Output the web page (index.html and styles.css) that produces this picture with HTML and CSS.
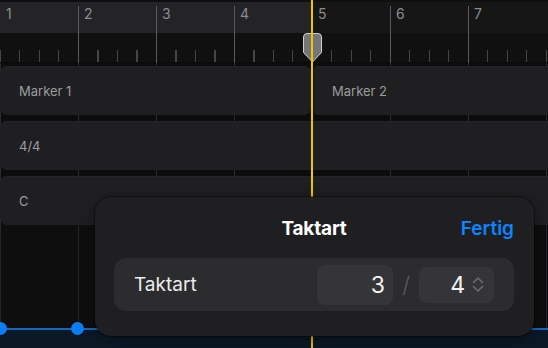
FILE: index.html
```html
<!DOCTYPE html>
<html lang="de">
<head>
<meta charset="utf-8">
<link rel="stylesheet" href="styles.css">
</head>
<body>
<div class="app">
  <div class="ruler">
    <div class="bar first"><span>1</span></div>
    <div class="bar"><span>2</span></div>
    <div class="bar"><span>3</span></div>
    <div class="bar"><span>4</span></div>
    <div class="bar"><span>5</span></div>
    <div class="bar"><span>6</span></div>
    <div class="bar"><span>7</span></div>
  </div>
  <div class="tracks">
    <div class="track">
      <div class="region marker1">Marker 1</div>
      <div class="region marker2">Marker 2</div>
    </div>
    <div class="track"><div class="region">4/4</div></div>
    <div class="track"><div class="region">C</div></div>
  </div>
  <div class="lane">
    <div class="lane-top"></div>
    <div class="lane-line"></div>
    <div class="lane-bottom"></div>
    <span class="dot dot1"></span>
    <span class="dot dot2"></span>
  </div>
  <div class="playhead">
    <svg class="handle" width="21" height="32" viewBox="0 0 21 32">
      <path d="M1.5 5 Q1.5 1.5 5 1.5 L16 1.5 Q19.5 1.5 19.5 5 L19.5 20.5 L10.5 30 L1.5 20.5 Z" fill="#767678" stroke="#d0d0d0" stroke-width="1"/>
    </svg>
  </div>
  <div class="popover">
    <div class="pop-header">
      <span></span>
      <span class="pop-title">Taktart</span>
      <span class="pop-done">Fertig</span>
    </div>
    <div class="pop-row">
      <span class="row-label">Taktart</span>
      <div class="fields">
        <div class="field num">3</div>
        <span class="slash">/</span>
        <div class="field den">4
          <svg class="chev" width="14" height="17" viewBox="0 0 14 17">
            <path d="M2.5 6.5 L7 2 L11.5 6.5 M2.5 10.5 L7 15 L11.5 10.5" fill="none" stroke="#6c6c70" stroke-width="1.6" stroke-linecap="round" stroke-linejoin="round"/>
          </svg>
        </div>
      </div>
    </div>
  </div>
</div>
</body>
</html>
```

FILE: styles.css
```css
* { box-sizing: border-box; }
html, body { margin: 0; padding: 0; }
body {
  width: 548px;
  height: 348px;
  overflow: hidden;
  background: #0d0d0d;
  font-family: Inter, "Noto Sans", sans-serif;
}
.app {
  position: relative;
  width: 548px;
  height: 348px;
  display: flex;
  flex-direction: column;
  overflow: hidden;
}

/* Ruler */
.ruler {
  height: 63px;
  flex: none;
  display: flex;
  padding-top: 6px;
  background:
    linear-gradient(#0f0f0f, #0f0f0f) top / 100% 2px no-repeat,
    repeating-linear-gradient(90deg, #454545 0 1px, transparent 1px 19.5px) left bottom / 100% 12px no-repeat,
    linear-gradient(90deg, #242426 0 312px, #161616 312px) left 2px / 100% 31px no-repeat,
    #101010;
  border-bottom: 1px solid #0a0a0a;
}
.bar {
  width: 78px;
  flex: none;
  height: 57px;
  border-left: 1px solid #5a5a5c;
  padding-left: 5px;
  color: #8c8c8e;
  font-size: 14px;
  line-height: 16px;
}
.bar.first { border-left-color: transparent; }

/* Tracks */
.tracks {
  flex: none;
  display: flex;
  flex-direction: column;
  gap: 6px;
  padding-top: 3px;
  background:
    repeating-linear-gradient(90deg, #2a2a2a 0 1px, transparent 1px 78px) 0 0 / 100% 100%,
    #0c0c0c;
}
.track {
  height: 49px;
  display: flex;
  gap: 3px;
}
.region {
  flex: 1;
  background: #1f1f21;
  border-radius: 7px 0 0 7px;
  color: #9c9c9e;
  font-size: 13px;
  display: flex;
  align-items: center;
  padding-left: 19px;
  box-shadow: inset 0 1px 0 #242426;
}
.region.marker1 { flex: none; width: 311px; border-radius: 7px; }
.region.marker2 { padding-left: 18px; border-radius: 4px 0 0 4px; }

/* Lane */
.lane {
  flex: 1;
  position: relative;
  display: flex;
  flex-direction: column;
  background:
    repeating-linear-gradient(90deg, #262628 0 1px, transparent 1px 78px) 0 0 / 100% 100%,
    #0e0e0e;
}
.lane-top { flex: 1; }
.lane-line {
  height: 2px;
  flex: none;
  background: #1767c0;
}
.lane-bottom {
  height: 18px;
  flex: none;
  background: #0b1927;
}
.dot {
  position: absolute;
  width: 13px;
  height: 13px;
  border-radius: 50%;
  background: #0a7ef2;
  top: 97px;
}
.dot1 { left: -6px; }
.dot2 { left: 71px; }

/* Playhead */
.playhead {
  position: absolute;
  left: 311px;
  top: 0;
  width: 2px;
  height: 348px;
  background: #f4c300;
}
.handle {
  position: absolute;
  left: -9.5px;
  top: 32px;
}
.playhead::after {
  content: "";
  position: absolute;
  left: 0;
  top: 32px;
  width: 2px;
  height: 31px;
  background: #f4c300;
}

/* Popover */
.popover {
  position: absolute;
  left: 95px;
  top: 197px;
  width: 439px;
  height: 139px;
  background: #1f1f21;
  border-radius: 16px;
  box-shadow: 0 0 0 1px rgba(0,0,0,0.35), 0 4px 16px rgba(0,0,0,0.4);
  padding: 0 20px 25px 19px;
  display: flex;
  flex-direction: column;
}
.pop-header {
  height: 61px;
  display: grid;
  grid-template-columns: 1fr auto 1fr;
  align-items: center;
  padding-top: 2px;
}
.pop-title {
  color: #ffffff;
  font-size: 19px;
  font-weight: 700;
  letter-spacing: -0.2px;
}
.pop-done {
  justify-self: end;
  color: #0a84ff;
  font-size: 19px;
  font-weight: 600;
}
.pop-row {
  height: 53px;
  background: #2c2c2e;
  border-radius: 12px;
  display: flex;
  align-items: center;
  justify-content: space-between;
  padding: 0 20px 0 20px;
}
.row-label {
  color: #ececec;
  font-size: 19px;
}
.fields {
  display: flex;
  align-items: center;
}
.field {
  background: #353537;
  border-radius: 8px;
  color: #f2f2f2;
  font-size: 23px;
  display: flex;
  align-items: center;
  justify-content: flex-end;
}
.field.num {
  width: 76px;
  height: 40px;
  padding-right: 8px;
}
.slash {
  color: #5c5c5e;
  font-size: 22px;
  font-weight: 300;
  width: 26px;
  text-align: center;
}
.field.den {
  width: 75px;
  height: 36px;
  padding-right: 9px;
  gap: 6px;
}
.chev { flex: none; }
```
